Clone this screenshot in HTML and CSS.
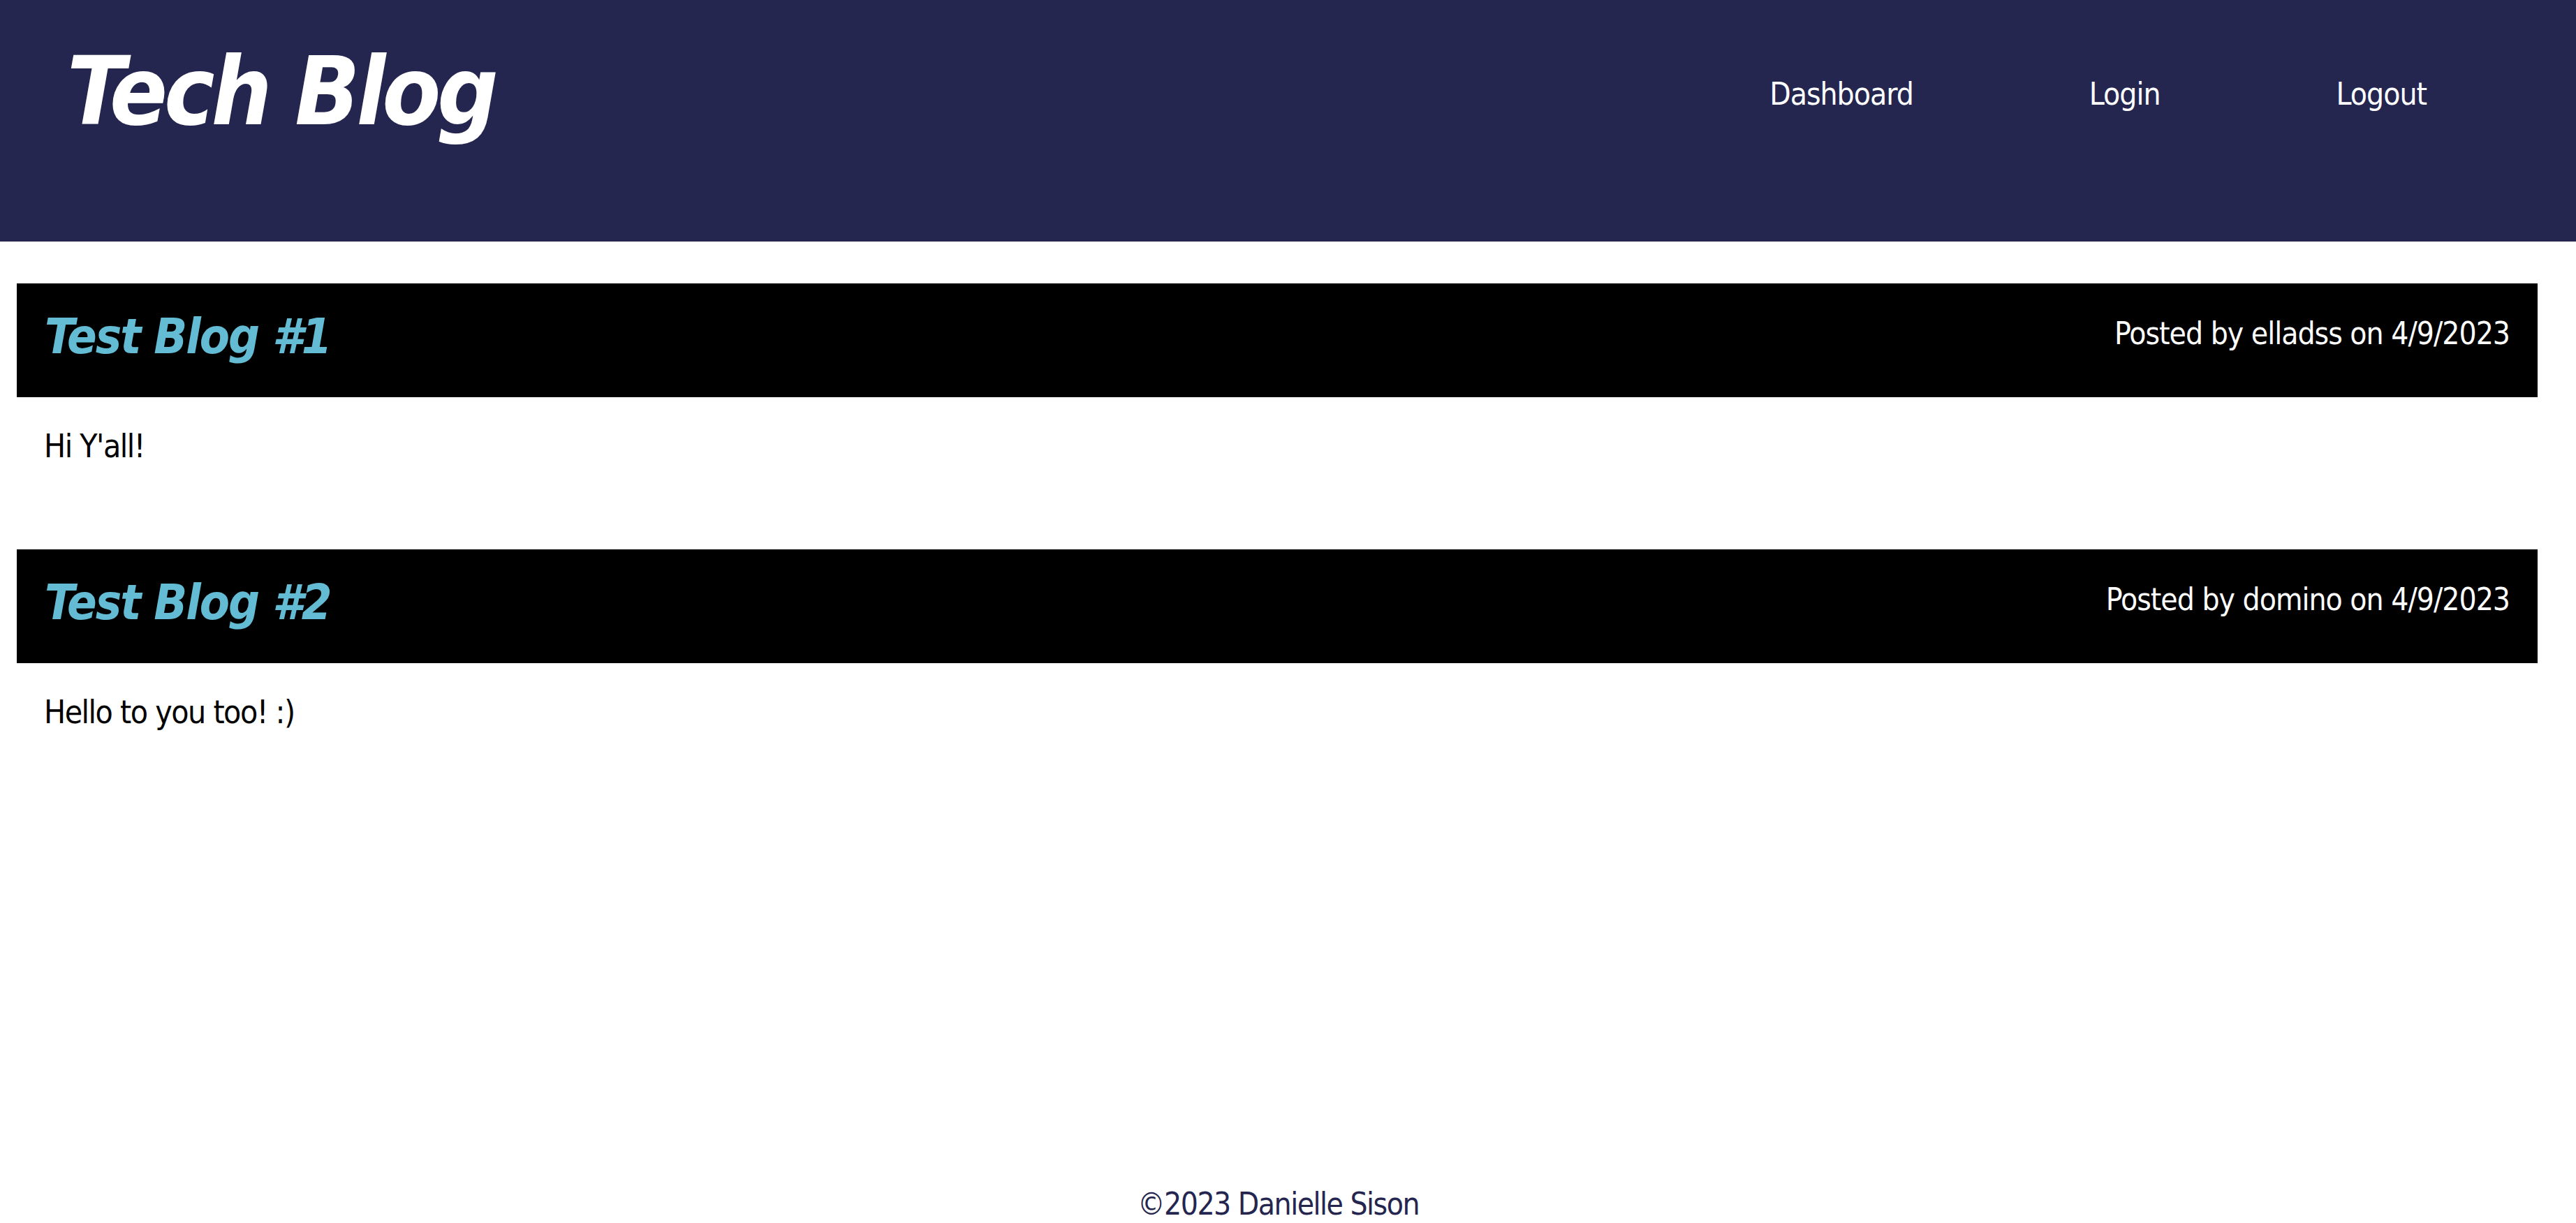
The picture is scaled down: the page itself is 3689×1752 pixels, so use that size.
FILE: index.html
```html
<!DOCTYPE html>
<html lang="en">
<head>
<meta charset="utf-8">
<title>Tech Blog</title>
<link rel="stylesheet" href="styles.css">
</head>
<body>
<header class="site-header">
  <h1 class="site-title">Tech Blog</h1>
  <nav class="site-nav">
    <a class="nav-link" href="#">Dashboard</a>
    <a class="nav-link" href="#">Login</a>
    <a class="nav-link" href="#">Logout</a>
  </nav>
</header>
<main class="posts">
  <article class="post">
    <div class="post-head">
      <h2 class="post-title">Test Blog #1</h2>
      <p class="post-meta">Posted by elladss on 4/9/2023</p>
    </div>
    <p class="post-body">Hi Y'all!</p>
  </article>
  <article class="post">
    <div class="post-head">
      <h2 class="post-title">Test Blog #2</h2>
      <p class="post-meta">Posted by domino on 4/9/2023</p>
    </div>
    <p class="post-body">Hello to you too! :)</p>
  </article>
</main>
<footer class="site-footer">©2023 Danielle Sison</footer>
</body>
</html>
```

FILE: styles.css
```css
html, body {
  margin: 0;
  padding: 0;
}
body {
  min-height: 100vh;
  display: flex;
  flex-direction: column;
  background: #ffffff;
  font-family: "Liberation Sans Narrow", "DejaVu Sans Condensed", "Liberation Sans", sans-serif;
  color: #000000;
}
.site-header {
  box-sizing: border-box;
  height: 346px;
  background: #24264f;
  display: flex;
  justify-content: space-between;
  align-items: flex-start;
  padding: 0 214px 0 96px;
}
.site-title {
  margin: 63px 0 0 0;
  font-size: 136px;
  line-height: 1;
  font-weight: bold;
  font-style: italic;
  letter-spacing: -5px;
  color: #ffffff;
}
.site-nav {
  display: flex;
  gap: 252px;
  margin-top: 113px;
}
.nav-link {
  font-size: 44px;
  line-height: 1;
  letter-spacing: -1px;
  color: #ffffff;
  text-decoration: none;
}
.posts {
  flex: 1;
  margin: 60px 55px 0 24px;
  display: flex;
  flex-direction: column;
  gap: 125px;
}
.post-head {
  box-sizing: border-box;
  height: 163px;
  background: #000000;
  display: flex;
  justify-content: space-between;
  align-items: flex-start;
  padding: 41px 40px 0 40px;
}
.post-title {
  margin: 0;
  font-size: 70px;
  line-height: 1;
  font-weight: bold;
  font-style: italic;
  letter-spacing: -2px;
  color: #63bcd4;
}
.post-meta {
  margin: 9px 0 0 0;
  font-size: 44px;
  line-height: 1;
  letter-spacing: -1px;
  color: #ffffff;
}
.post-body {
  margin: 47px 0 0 0;
  padding-left: 39px;
  font-size: 46px;
  line-height: 1;
  letter-spacing: -1.5px;
}
.site-footer {
  text-align: center;
  font-size: 44px;
  line-height: 1;
  letter-spacing: -1.5px;
  color: #24264f;
  padding: 0 28px 5px 0;
}
```
